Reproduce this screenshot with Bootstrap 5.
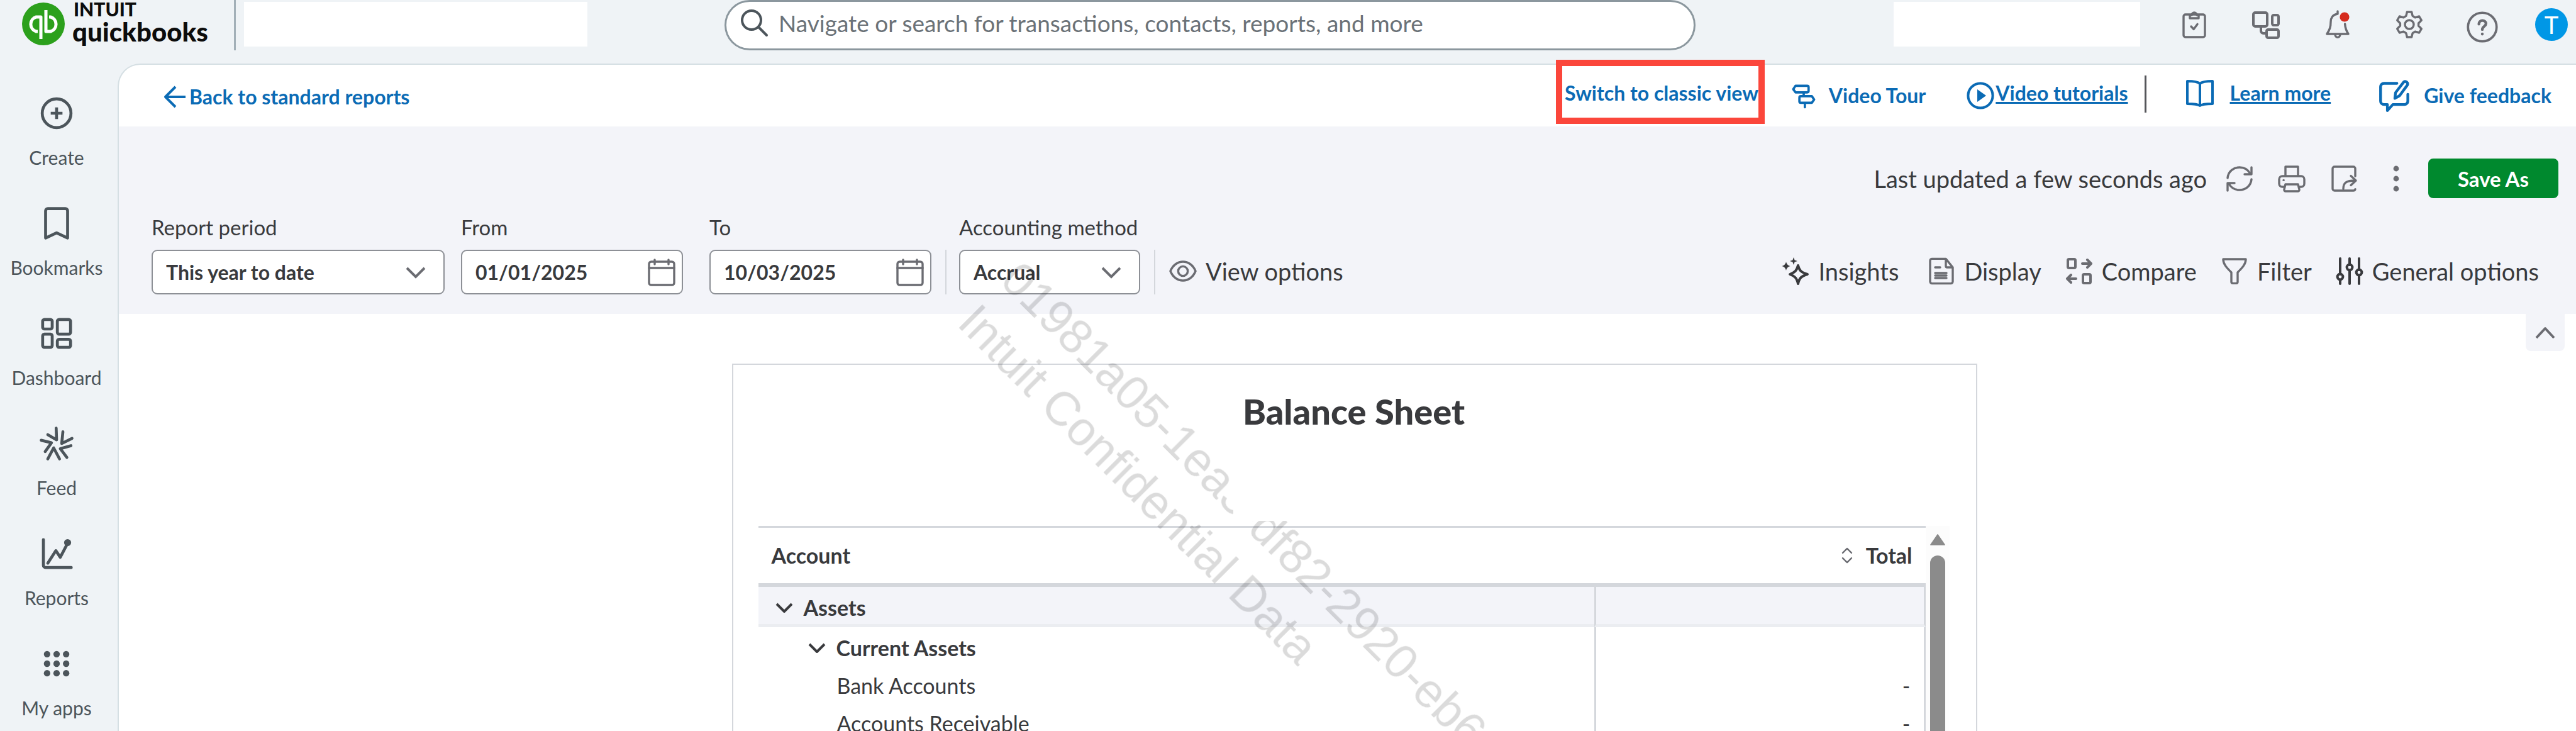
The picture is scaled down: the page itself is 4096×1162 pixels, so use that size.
<!DOCTYPE html>
<html lang="en">
<head>
<meta charset="utf-8">
<meta name="viewport" content="width=device-width, initial-scale=1">
<title>Balance Sheet - QuickBooks</title>
<link rel="stylesheet" href="https://cdn.jsdelivr.net/npm/bootstrap@5.3.0/dist/css/bootstrap.min.css">
<style>
:root{--ink:#393a3d;--soft:#6b6c72;--line:#d4d7dc;--pane:#f3f4f9;--chrome:#eff3f6;--blue:#0b6bb5}
body{font-family:Lato,"Open Sans","Liberation Sans",sans-serif;color:var(--ink);background:var(--chrome);overflow:hidden;font-size:33px;line-height:36px}
svg{display:block;flex:none;fill:none;stroke:currentColor;stroke-width:1.7;stroke-linecap:round;stroke-linejoin:round}
.ic{width:48px;height:48px}
.ic-lg{width:52px;height:52px}
.w2{stroke-width:2}.w4{stroke-width:4}
.butt{stroke-linecap:butt}
.solid{fill:currentColor}
.filled{fill:currentColor;stroke:none}
button.plain{border:0;background:none;padding:0;color:inherit;display:flex;align-items:center}
.gray,button.gray{color:var(--soft)}
a{color:var(--blue);font-weight:700;text-decoration:none}

.topbar{height:101px}
.brand{width:375px;padding-left:35px;gap:12px;border-right:3px solid #a3b0b8;height:80px;color:#0c0c0c}
.brand-mark{color:#fff;stroke-width:5;stroke-linecap:butt}
.brand-mark circle{fill:#2ca01c;stroke:none}
.brand-name{font-weight:900}
.brand-name .over{font-size:30px;line-height:28px;padding-left:2px}
.brand-name .under{font-size:42px;line-height:44px}
.blank{background:#fff;height:71px;margin-top:3px}
.blank-l{width:546px;margin-left:13px}
.blank-r{width:392px}
.search{height:80px;border:3px solid #8b979e;border-radius:40px;background:#fff;margin-left:218px;margin-right:315px;padding:0 40px 8px 20px;color:#4c555b}
.search input{border:0;outline:0;background:none;font-size:37px;color:#6b7278;margin-left:13px}
.search input::placeholder{color:#6b7278;opacity:1}
.tray{color:var(--soft);height:77px;padding-right:13px;padding-left:62px;gap:66px}
.avatar{width:52px;height:52px;border-radius:50%;background:#0097e6;color:#fff;font-size:38px;line-height:52px;text-align:center;margin-left:-8px}
.dot{fill:#d52b1e;stroke:none}

.side{width:187px;padding-top:54px;padding-right:7px;color:#4c555b}
.side a{height:175px;color:#4c555b;font-weight:400;font-size:30px}
.side svg{width:56px;height:56px;margin-bottom:24px;margin-top:-3px}

.work{border:2px solid #d5dfe3;border-right:0;border-bottom:0;border-top-left-radius:36px;background:#fff;min-width:0}
.linkbar{height:98px;padding-left:64px;padding-right:39px;font-size:32px}
.up{padding-bottom:8px}
.down{padding-top:4px}
.marked::after{content:"";position:absolute;top:-35px;bottom:-23px;left:-14px;right:-10px;border:10px solid #fb463b}
.stroke{width:3px;height:59px;background:#55565a;margin:0 61px 6px 26px}
.gap-tour{margin-left:48px}.gap-video{margin-left:63px}.gap-feed{margin-left:76px}

.tools{background:var(--pane);padding:51px 28px 31px 52px}
.tools .stamp{font-size:38px}
.tools .act{margin-left:35px}
.save{background:#00892e;color:#fff;font-weight:700;width:207px;height:63px;border:0;border-radius:8px;margin-left:27px}
.filters{padding-top:28px}
.filters label{display:block;margin-bottom:18px}
.field-a{margin-right:26px}.field-b{margin-right:42px}
.box{height:71px;border:2px solid #8d9096;border-radius:9px;background-color:#fff;color:var(--ink);font-weight:700;font-size:32px;padding-left:21px}
select.box{appearance:none;background-repeat:no-repeat;background-position:right 24px center;background-size:40px 40px;background-image:url("data:image/svg+xml,%3Csvg xmlns='http://www.w3.org/2000/svg' viewBox='0 0 40 40'%3E%3Cpath d='M6 13l14 14 14-14' fill='none' stroke='%236b6c72' stroke-width='4'/%3E%3C/svg%3E")}
.box input{border:0;outline:0;background:none;font:inherit;color:inherit;padding:0;min-width:0}
.w-period{width:466px}.w-date{width:353px}.w-method{width:288px}
.rule{width:2px;height:71px;background:var(--line);margin:0 20px 0 22px}
button.tool-btn{height:71px;font-size:38px;gap:12px;padding-bottom:4px}
.tool-set{gap:36px;margin-right:31px}

.sheet-area{padding-left:22px;padding-top:79px}
button.fold{position:absolute;top:0;right:18px;width:62px;height:59px;background:var(--pane);border-radius:0 0 8px 8px;color:var(--soft);justify-content:center}
.sheet{width:1980px;max-width:100%;border:2px solid var(--line);border-bottom:0;padding:0 42px 0 40px}
.sheet-title{position:relative;z-index:3;width:384px;height:248px;padding-top:44px;background:#fff;margin:0 auto;font-size:56px;line-height:60px;font-weight:900;text-align:center;white-space:nowrap}
.grid{border-collapse:separate;border-spacing:0;flex:1;font-size:34px}
.grid th,.grid td{padding:0 21px;height:60px}
.grid thead th{height:97px;border-top:3px solid var(--line);border-bottom:6px solid var(--line);font-weight:700}
.grid tbody th,.grid tbody td{padding-top:6px;font-weight:400}
.grid tbody td{border-left:3px solid var(--line);border-right:3px solid var(--line);text-align:right;width:527px}
.grid tbody .strong{font-weight:700}
.grid .band th,.grid .band td{background:var(--pane);height:64px;border-bottom:5px solid #ebedf1}
.l1{margin-left:2px}.l2{margin-left:54px}.l3{margin-left:104px}
.chev{width:36px;height:36px;margin-right:13px}
.rail{width:38px;background:#fcfcfc;padding-top:12px;color:#8b8b8b}
.thumb{width:24px;border-radius:12px 12px 0 0;background:#8b8b8b;margin-top:15px}

.stamp-over{position:fixed;z-index:2;left:1640px;top:396px;transform:rotate(45deg);transform-origin:0 0;font-family:"Liberation Sans",Arial,sans-serif;font-size:76px;line-height:96px;color:rgba(0,0,0,.14);white-space:nowrap;pointer-events:none}
</style>
<script src="https://cdn.jsdelivr.net/npm/bootstrap@5.3.0/dist/js/bootstrap.bundle.min.js"></script>
</head>
<body class="vh-100 d-flex flex-column">

<header class="topbar d-flex align-items-start flex-shrink-0">
  <div class="brand d-flex align-items-start flex-shrink-0">
    <svg class="brand-mark mt-1" width="68" height="68" viewBox="0 0 68 68" aria-hidden="true"><circle cx="34" cy="34" r="34"/><path d="M25 46h-2.500a12 12 0 0 1 0-23H30v35"/><path d="M43 23h2.500a12 12 0 0 1 0 23H38V12"/></svg>
    <div class="brand-name"><div class="over">INTUIT</div><div class="under">quickbooks</div></div>
  </div>
  <div class="blank blank-l flex-shrink-0"></div>
  <label class="search d-flex align-items-center flex-grow-1">
    <svg class="ic w2" viewBox="0 0 24 24" aria-hidden="true"><circle cx="10" cy="10" r="7.500"/><path d="M15.500 15.500L22 22"/></svg>
    <input class="flex-grow-1" type="text" placeholder="Navigate or search for transactions, contacts, reports, and more" aria-label="Search">
  </label>
  <div class="blank blank-r flex-shrink-0"></div>
  <div class="tray d-flex align-items-center flex-shrink-0">
    <button class="plain" aria-label="Tasks"><svg class="ic" viewBox="0 0 24 24"><rect x="3.500" y="4" width="17" height="18" rx="1.500"/><path d="M8.500 7V4.500h1.500a2 2 0 0 1 4 0h1.500V7zM9.500 13.500l2 2.200 3-4"/></svg></button>
    <button class="plain" aria-label="Integrations"><svg class="ic w2" viewBox="0 0 24 24"><rect x="2" y="2.500" width="11" height="11" rx="1.500"/><rect x="17" y="4.500" width="5" height="8" rx="1.200"/><rect x="12.500" y="16" width="9.500" height="6.500" rx="1.200"/><path d="M8 13.500V17a2 2 0 0 0 2 2h2"/></svg></button>
    <button class="plain" aria-label="Notifications"><svg class="ic" viewBox="0 0 24 24"><path d="M12 1.500V3.500C8 4 6.500 7 6.500 10c0 4-.8 6-3 9.500h17C18.500 16.500 18 14 17.800 11.500M10 19.800c0 3.200 4 3.200 4 0"/><circle class="dot" cx="17.500" cy="6" r="3.800"/></svg></button>
    <button class="plain" aria-label="Settings"><svg class="ic" viewBox="0 0 24 24"><circle cx="12" cy="12" r="3.500"/><path d="M10.200 2h3.600l.8 3.200 2 1.200 3.200-.9 1.800 3.100-2.300 2.400v2l2.300 2.400-1.800 3.100-3.200-.9-2 1.200-.8 3.200h-3.600l-.8-3.200-2-1.200-3.200.9-1.800-3.100L4.700 13v-2L2.400 8.600l1.800-3.100 3.200.9 2-1.200z"/></svg></button>
    <button class="plain mt-2" aria-label="Help"><svg class="ic-lg" viewBox="0 0 24 24"><circle cx="12" cy="12" r="10.500"/><path class="w2" d="M9.500 9.800c0-3.500 5.200-3.300 5.200-.3 0 2-2.700 2-2.700 4.300M12 17v.2"/></svg></button>
    <div class="avatar">T</div>
  </div>
</header>

<div class="d-flex flex-grow-1">
  <nav class="side flex-shrink-0" aria-label="Main">
    <a href="#" class="d-flex flex-column align-items-center"><svg class="w2" viewBox="0 0 24 24"><circle cx="12" cy="12" r="9.800"/><path class="butt" d="M12 8v8M8 12h8"/></svg>Create</a>
    <a href="#" class="d-flex flex-column align-items-center"><svg class="w2" viewBox="0 0 24 24"><path d="M4.500 3.500a1.500 1.500 0 0 1 1.500-1.500h12a1.500 1.500 0 0 1 1.500 1.500V22L12 18.500 4.500 22z"/></svg>Bookmarks</a>
    <a href="#" class="d-flex flex-column align-items-center"><svg class="w2" viewBox="0 0 24 24"><rect x="2.500" y="2.500" width="6.500" height="6.500" rx="1.200"/><rect x="12.500" y="2.500" width="9" height="10" rx="1.200"/><rect x="2.500" y="12.500" width="6.500" height="9" rx="1.200"/><rect x="12.500" y="16" width="9" height="5.500" rx="1.200"/></svg>Dashboard</a>
    <a href="#" class="d-flex flex-column align-items-center"><svg class="w2" viewBox="0 0 24 24"><path d="M11.700 1.500l.3 8L6 6M16.300 4l-.8 8 7-3.500M21.800 13.500L14.500 15.500l4.500 6M14 22.500l-4-7.500-4 7.500M4.200 17.500L8.500 11.500 1.500 9.800"/></svg>Feed</a>
    <a href="#" class="d-flex flex-column align-items-center"><svg class="w2" viewBox="0 0 24 24"><path d="M3 2.500V20a1.500 1.500 0 0 0 1.500 1.500H22M6 18.500L11.500 10l3 4.500L19.500 5"/><circle class="solid" cx="19.500" cy="4.500" r="1.400"/></svg>Reports</a>
    <a href="#" class="d-flex flex-column align-items-center"><svg class="filled" viewBox="0 0 24 24"><circle cx="5.500" cy="5.500" r="2.200"/><circle cx="12" cy="5.500" r="2.200"/><circle cx="18.500" cy="5.500" r="2.200"/><circle cx="5.500" cy="12" r="2.200"/><circle cx="12" cy="12" r="2.200"/><circle cx="18.500" cy="12" r="2.200"/><circle cx="5.500" cy="18.500" r="2.200"/><circle cx="12" cy="18.500" r="2.200"/><circle cx="18.500" cy="18.500" r="2.200"/></svg>My apps</a>
  </nav>

  <main class="work flex-grow-1">
    <div class="linkbar d-flex align-items-center">
      <a href="#" class="down d-flex align-items-center me-auto"><svg class="ic w2 butt" viewBox="0 0 24 24"><path d="M21 12H5M13 4L5 12l8 8"/></svg>Back to standard reports</a>
      <a href="#" class="marked position-relative up">Switch to classic view</a>
      <a href="#" class="gap-tour d-flex align-items-center"><svg class="ic w2" viewBox="-1 -1 26 26"><path d="M5 3.500h10a1.200 1.200 0 0 1 1.200 1.200V8a1.200 1.200 0 0 1-1.200 1.200H5L3 6.500zM19 12.500H9.500a1.200 1.200 0 0 0-1.200 1.200V17a1.200 1.200 0 0 0 1.200 1.200H19l2-2.800zM12 9.500v3M13 18.500V22"/></svg><span class="ms-3">Video Tour</span></a>
      <a href="#" class="gap-video d-flex align-items-center"><svg class="ic w2" viewBox="0 0 24 24"><circle cx="12" cy="12" r="9.800"/><path class="filled" d="M9.500 7v10l7-5z"/></svg><span class="text-decoration-underline mb-2">Video tutorials</span></a>
      <div class="stroke"></div>
      <a href="#" class="up d-flex align-items-center"><svg class="ic w2" viewBox="0 0 24 24"><path d="M12 4.500C10 2.500 5 2.500 2 2.500v18c4 0 8 0 10 1.500 2-1.500 6-1.500 10-1.500v-18c-3 0-8 0-10 2zM12 4.500V22"/></svg><span class="text-decoration-underline ms-4">Learn more</span></a>
      <a href="#" class="gap-feed d-flex align-items-center"><svg class="ic-lg w2" viewBox="0 0 24 24"><path d="M13.500 3H4a2.500 2.500 0 0 0-2.500 2.500V16A2.500 2.500 0 0 0 4 18.500h2.500V23l4-4.500H19a2.500 2.500 0 0 0 2.500-2.500v-5M12 14l.5-4.200L18.500 2a1.800 1.800 0 0 1 2.700 2.200L15.500 12z"/></svg><span class="ms-3 ps-1">Give feedback</span></a>
    </div>

    <section class="tools">
      <div class="d-flex align-items-center justify-content-end">
        <span class="stamp me-4">Last updated a few seconds ago</span>
        <button class="plain gray ms-1" aria-label="Refresh"><svg class="ic" viewBox="0 0 24 24"><path d="M2.500 11.500C3 6 7.500 3 12 3c3.500 0 6.500 1.500 8.500 5M21.500 3v5.500H16M21.500 12.500C21 18 16.500 21 12 21c-3.500 0-6.500-1.500-8.500-5M2.500 21.500V15.500H8"/></svg></button>
        <button class="plain gray act" aria-label="Print"><svg class="ic" viewBox="0 0 24 24"><path d="M7 10V2.500h10V10M6 18.500H4.500A2.500 2.500 0 0 1 2 16v-3.500A2.500 2.500 0 0 1 4.500 10h15a2.500 2.500 0 0 1 2.500 2.500V16a2.500 2.500 0 0 1-2.500 2.500H18M7 16.500h10l1 4a1.200 1.200 0 0 1-1 1.500H7a1.200 1.200 0 0 1-1-1.500zM5.500 13.200h.1"/></svg></button>
        <button class="plain gray act" aria-label="Export"><svg class="ic" viewBox="0 0 24 24"><path d="M21 10V4a1.500 1.500 0 0 0-1.500-1.500h-15A1.500 1.500 0 0 0 3 4v16a1.500 1.500 0 0 0 1.500 1.500h15c.8 0 1.500-.5 1.500-1.200M11.500 20c0-4.500 2-6.500 9.500-6.500M17.500 9.800l4 3.700-4 3.700"/></svg></button>
        <button class="plain gray act" aria-label="More"><svg class="ic filled" viewBox="0 0 24 24"><circle cx="12" cy="4" r="2.200"/><circle cx="12" cy="12" r="2.200"/><circle cx="12" cy="20" r="2.200"/></svg></button>
        <button class="save">Save As</button>
      </div>

      <div class="filters d-flex align-items-end">
        <div class="field-a"><label for="period">Report period</label><select id="period" class="box w-period d-block"><option>This year to date</option></select></div>
        <div class="field-b"><label for="from">From</label><div class="box w-date d-flex align-items-center"><input id="from" class="flex-grow-1" type="text" value="01/01/2025"><svg class="ic gray me-2" viewBox="0 0 24 24"><rect x="2" y="3.500" width="20" height="18.500" rx="1.800"/><path d="M2 8.500h20M6.500 2v3.500M17.500 2v3.500"/></svg></div></div>
        <div><label for="to">To</label><div class="box w-date d-flex align-items-center"><input id="to" class="flex-grow-1" type="text" value="10/03/2025"><svg class="ic gray me-2" viewBox="0 0 24 24"><rect x="2" y="3.500" width="20" height="18.500" rx="1.800"/><path d="M2 8.500h20M6.500 2v3.500M17.500 2v3.500"/></svg></div></div>
        <div class="rule"></div>
        <div><label for="method">Accounting method</label><select id="method" class="box w-method d-block"><option>Accrual</option></select></div>
        <div class="rule"></div>
        <button class="plain tool-btn me-auto"><svg class="ic gray" viewBox="0 0 24 24"><path d="M2 12c2-5 6-7.500 10-7.500S20 7 22 12c-2 5-6 7.500-10 7.500S4 17 2 12z"/><circle cx="12" cy="12" r="3.800"/></svg>View options</button>
        <div class="tool-set d-flex">
          <button class="plain tool-btn me-2"><svg class="ic w2" viewBox="0 0 24 24"><path d="M14 7.500c1 4 2.500 5.500 7.500 7-5 1.500-6.500 3-7.500 7.500-1-4.500-2.500-6-6.500-7.500 4-1.500 5.500-3 6.500-7z"/><path class="filled" d="M4.500 4.500c.5 2 1.300 2.800 3.300 3.500-2 .7-2.800 1.500-3.300 3.500C4 9.500 3.200 8.700 1.200 8c2-.7 2.800-1.500 3.300-3.500zM10.500 1l.8 2.200 2.200.8-2.200.8-.8 2.200-.8-2.200L7.500 4l2.200-.8z"/></svg>Insights</button>
          <button class="plain tool-btn"><svg class="ic gray" viewBox="0 0 24 24"><path d="M15.500 2.200h-11A1.500 1.500 0 0 0 3 3.700v16.600A1.500 1.500 0 0 0 4.500 21.800h15a1.500 1.500 0 0 0 1.500-1.500V9zM15.500 2.200V8a1 1 0 0 0 1 1H21M7 9h4M7 13.500h9M7 15.500h9M7 17.500h9"/></svg>Display</button>
          <button class="plain tool-btn"><svg class="ic gray w2" viewBox="0 0 24 24"><rect x="3" y="2.500" width="6" height="7" rx="1"/><rect x="15" y="14.500" width="6" height="7" rx="1"/><path d="M14.500 6h7M18.500 3l3 3-3 3M9.500 18h-7M5.500 15l-3 3 3 3"/></svg>Compare</button>
          <button class="plain tool-btn"><svg class="ic gray" viewBox="0 0 24 24"><path d="M3 2.500h18c0 4-3 7-6.500 10.500v7.500a1.200 1.200 0 0 1-1.200 1.200h-2.600a1.200 1.200 0 0 1-1.200-1.200V13C6 9.500 3 6.500 3 2.500z"/></svg>Filter</button>
          <button class="plain tool-btn"><svg class="ic w2" viewBox="0 0 24 24"><path d="M4.500 2v12.500M4.500 19v3M12 2v5M12 11.500V22M19.500 2v9M19.500 15.500V22"/><circle cx="4.500" cy="16.500" r="2.200"/><circle cx="12" cy="9" r="2.200"/><circle cx="19.500" cy="13" r="2.200"/></svg>General options</button>
        </div>
      </div>
    </section>

    <section class="sheet-area position-relative">
      <button class="plain fold" aria-label="Collapse"><svg class="w4 butt" width="40" height="40" viewBox="0 0 40 40"><path d="M6 28l14-15 14 15"/></svg></button>
      <div class="sheet mx-auto">
        <h1 class="sheet-title">Balance Sheet</h1>
        <div class="d-flex mt-2">
          <table class="grid">
            <thead><tr><th scope="col">Account</th><th scope="col"><span class="d-flex justify-content-end align-items-center"><svg class="gray w2 me-3" width="28" height="28" viewBox="0 0 24 24"><path d="M6 8.500l6-6 6 6M6 15.500l6 6 6-6"/></svg>Total</span></th></tr></thead>
            <tbody>
              <tr class="band"><th scope="row" class="strong"><span class="l1 d-flex align-items-center"><svg class="chev w4 butt" viewBox="0 0 36 36"><path d="M6 12l12 12 12-12"/></svg>Assets</span></th><td></td></tr>
              <tr><th scope="row" class="strong"><span class="l2 d-flex align-items-center"><svg class="chev w4 butt" viewBox="0 0 36 36"><path d="M6 12l12 12 12-12"/></svg>Current Assets</span></th><td></td></tr>
              <tr><th scope="row"><span class="l3">Bank Accounts</span></th><td>-</td></tr>
              <tr><th scope="row"><span class="l3">Accounts Receivable</span></th><td>-</td></tr>
            </tbody>
          </table>
          <div class="rail d-flex flex-column align-items-center">
            <svg class="solid" width="26" height="20" viewBox="0 0 26 20"><path d="M13 2L24 18H2z"/></svg>
            <div class="thumb flex-grow-1"></div>
          </div>
        </div>
      </div>
    </section>
  </main>
</div>

<div class="stamp-over" aria-hidden="true">01981a05-1ea3-df82-2920-eb6<br>Intuit Confidential Data</div>
</body>
</html>
